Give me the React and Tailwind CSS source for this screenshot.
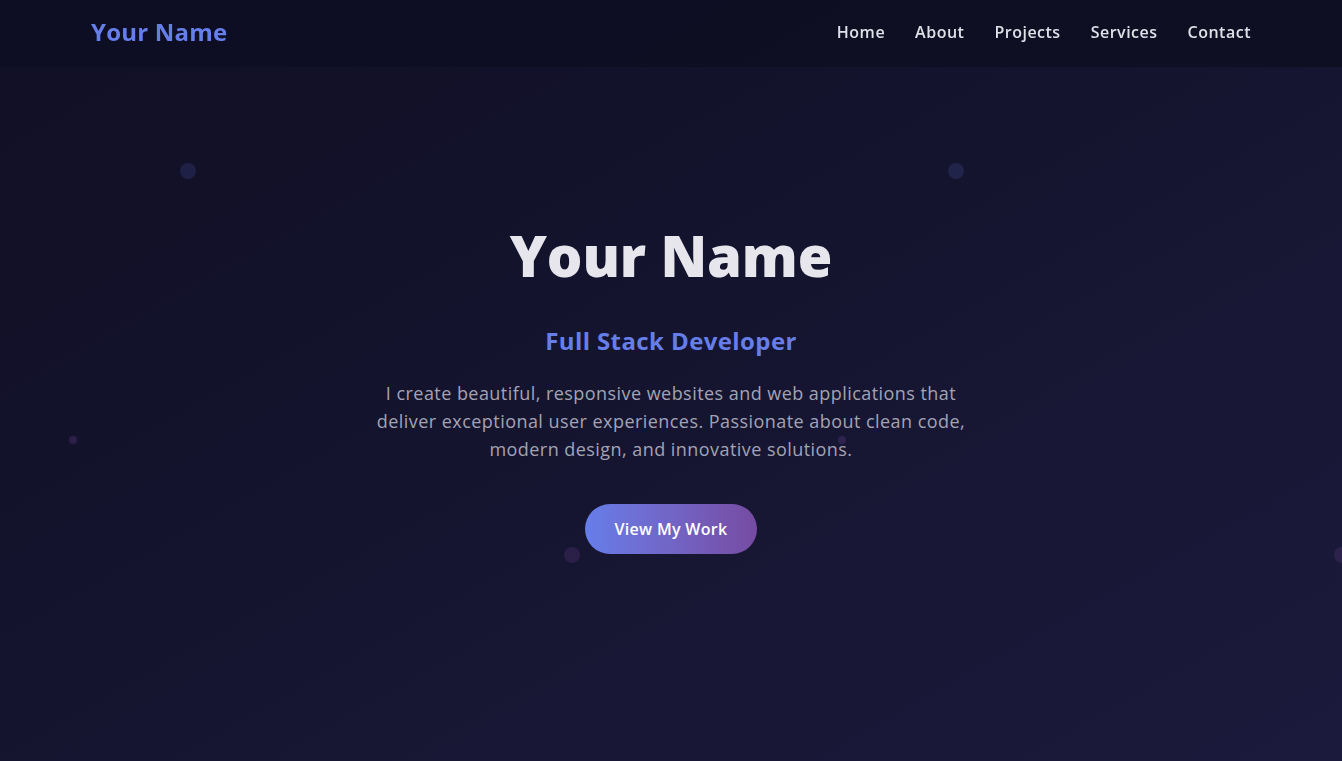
import React from 'react';

const links = ['Home', 'About', 'Projects', 'Services', 'Contact'];

// decorative floating dots behind the hero
const dots = [
    {cls: 'left-[180px] top-[163px] w-4 h-4 bg-[#667eea]/15'},
    {cls: 'left-[948px] top-[163px] w-4 h-4 bg-[#667eea]/15'},
    {cls: 'left-[69px] top-[436px] w-2 h-2 bg-[#764ba2]/25'},
    {cls: 'left-[838px] top-[436px] w-2 h-2 bg-[#764ba2]/25'},
    {cls: 'left-[564px] top-[547px] w-4 h-4 bg-[#764ba2]/20'},
    {cls: 'left-[1334px] top-[547px] w-4 h-4 bg-[#764ba2]/20'},
];

function Header() {
    return (
        <header className="fixed top-0 left-0 right-0 z-20 h-[67px] bg-[#0e0f23]/95">
            <nav className="max-w-[1200px] mx-auto px-5 pb-[4px] h-full flex items-center justify-between">
                <div className="text-[24px] font-bold tracking-[0.2px] text-[#667eea]">Your Name</div>
                <ul className="flex items-center gap-[30px]">
                    {links.map(l => (
                        <li key={l}>
                            <a href="#" className="text-[16px] font-semibold tracking-[0.5px] text-[#e0e0e8]">{l}</a>
                        </li>
                    ))}
                </ul>
            </nav>
        </header>
    );
}

function App() {
    return (
        <div className="min-h-screen bg-[#0f0f23] font-['Open_Sans',sans-serif]">
            <Header/>
            <section className="relative h-[761px] overflow-hidden bg-gradient-to-br from-[#100f24] to-[#1b1a3c]">
                {dots.map((d, i) => (
                    <span key={i} className={`absolute rounded-full ${d.cls}`}/>
                ))}
                <div className="relative z-10 h-full flex flex-col items-center justify-center text-center pt-[14px]">
                    <h1 className="text-[56px] leading-[67px] font-extrabold tracking-[-0.1px] text-[#e6e6ec]">Your Name</h1>
                    <h2 className="mt-[34px] text-[24px] leading-[36px] font-bold tracking-[0.4px] text-[#667eea]">Full Stack Developer</h2>
                    <p className="mt-[20px] max-w-[600px] text-[18px] leading-[28px] tracking-[0.45px] text-[#a3a3b5]">
                        I create beautiful, responsive websites and web applications that deliver exceptional user experiences. Passionate about clean code, modern design, and innovative solutions.
                    </p>
                    <a href="#"
                       className="mt-[41px] inline-flex items-center h-[50px] px-[30px] rounded-full bg-gradient-to-r from-[#667eea] to-[#764ba2] text-white text-[16px] font-semibold tracking-[0.3px]">
                        View My Work
                    </a>
                </div>
            </section>
        </div>
    );
}

export default App;
